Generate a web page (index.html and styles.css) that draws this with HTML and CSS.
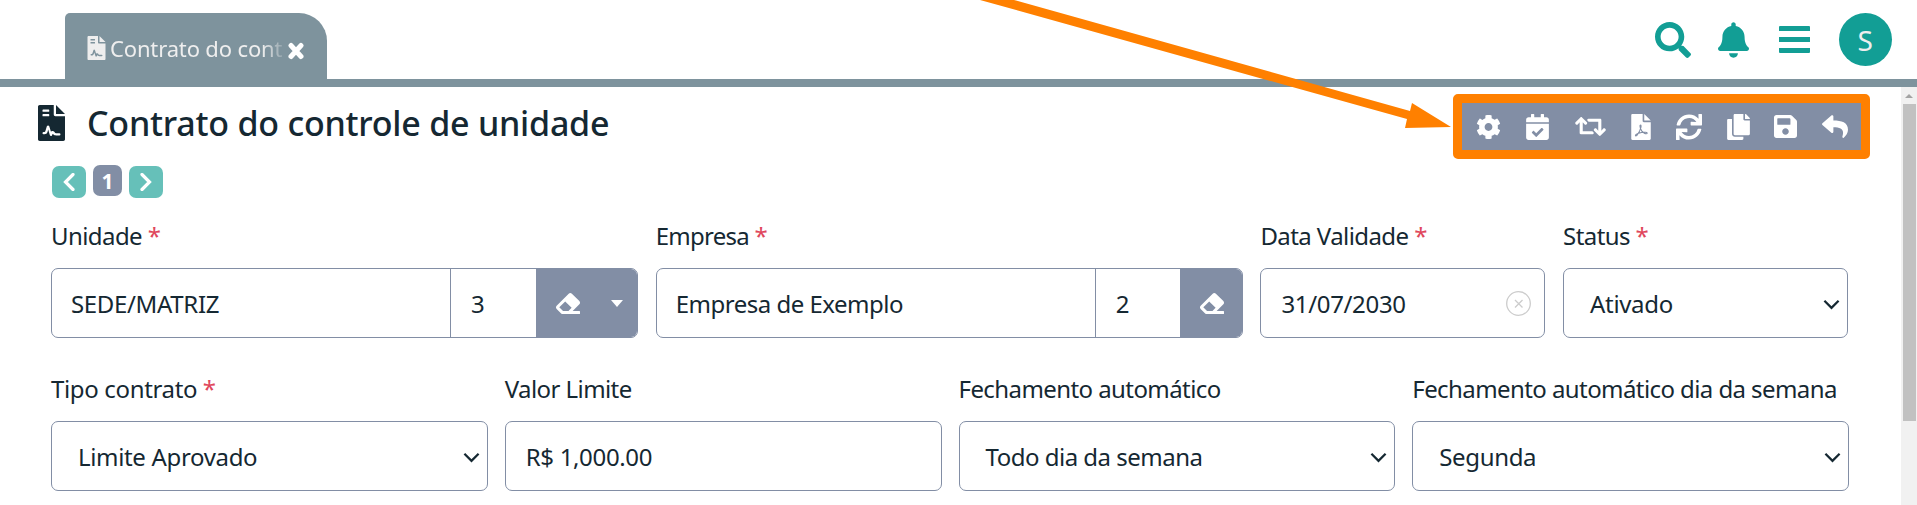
FILE: index.html
```html
<!DOCTYPE html>
<html lang="pt-BR">
<head>
<meta charset="utf-8">
<title>Contrato do controle de unidade</title>
<link rel="stylesheet" href="styles.css">
</head>
<body>
<svg class="defs" aria-hidden="true">
  <symbol id="contract" viewBox="0 0 384 512"><path fill-rule="evenodd" d="M224 0v136c0 13 11 24 24 24h136v328c0 13-11 24-24 24H24c-13 0-24-11-24-24V24C0 11 11 0 24 0zM256 0l128 128H256zM72 64c-4 0-8 4-8 8v16c0 4 4 8 8 8h80c4 0 8-4 8-8V72c0-4-4-8-8-8zm0 64c-4 0-8 4-8 8v16c0 4 4 8 8 8h80c4 0 8-4 8-8v-16c0-4-4-8-8-8zM80 384c-21 0-21 32 0 32h12c20 0 37-13 43-32l10-34 24 79c4 14 23 15 29 3l8-15c3-5 7-5 10-1 10 13 26 16 40 16h48c21 0 21-32 0-32h-48c-8 0-14-2-17-8-11-22-38-28-56-14l-23-75c-5-17-29-17-34 0l-22 72c-2 6-6 9-12 9z"/></symbol>
  <symbol id="eraser" viewBox="0 0 512 512"><path fill-rule="evenodd" d="M498 273c19-19 19-49 0-68L339 46c-19-19-50-19-68 0L14 303c-19 19-19 49 0 68l96 96c9 9 21 13 34 13h356c7 0 12-5 12-12v-40c0-7-5-12-12-12H355zm-302-61l137 136-67 68H150l-80-80z"/></symbol>
  <symbol id="chevron" viewBox="0 0 18 11"><path d="M1.5 1.5 9 9l7.500-7.500" fill="none" stroke="currentColor" stroke-width="2.400"/></symbol>
</svg>

<header class="topbar">
  <div class="tab">
    <svg class="tab-icon"><use href="#contract"/></svg>
    <span class="tab-title">Contrato do cont</span>
    <svg class="tab-close" viewBox="0 0 18 18"><path d="M4 3.500l10 11M14 3.500L4 14.500" stroke="currentColor" stroke-width="5" stroke-linecap="round"/></svg>
  </div>
  <nav class="tools">
    <svg class="i-search" viewBox="0 0 512 512"><path d="M505 442.700L405.300 343c-4.500-4.500-10.600-7-17-7H372c27.600-35.300 44-79.700 44-128C416 93.100 322.900 0 208 0S0 93.100 0 208s93.100 208 208 208c48.300 0 92.700-16.400 128-44v16.300c0 6.400 2.500 12.500 7 17l99.700 99.700c9.400 9.400 24.600 9.400 33.900 0l28.300-28.300c9.400-9.400 9.400-24.600.1-34zM208 336c-70.700 0-128-57.200-128-128 0-70.700 57.200-128 128-128 70.700 0 128 57.200 128 128 0 70.700-57.200 128-128 128z"/></svg>
    <svg class="i-bell" viewBox="0 0 448 512"><path d="M224 512c35.320 0 63.970-28.650 63.970-64H160.030c0 35.350 28.650 64 63.970 64zm215.390-149.710c-19.320-20.760-55.470-51.990-55.470-154.290 0-77.700-54.480-139.900-127.940-155.160V32c0-17.670-14.320-32-31.980-32s-31.980 14.330-31.980 32v20.840C118.560 68.100 64.080 130.300 64.080 208c0 102.300-36.150 133.530-55.470 154.290-6 6.450-8.660 14.160-8.610 21.710.11 16.400 12.980 32 32.100 32h383.800c19.120 0 32-15.600 32.100-32 .05-7.550-2.610-15.270-8.610-21.710z"/></svg>
    <svg class="i-bars" viewBox="0 0 31 28"><path d="M1 0h29q1 0 1 1v4H0V1q0-1 1-1zM0 11h31v5H0zM0 22h31v4q0 1-1 1H1q-1 0-1-1z"/></svg>
    <span class="avatar">S</span>
  </nav>
</header>

<div class="body">
  <main class="page">
    <div class="heading">
      <h1 class="title"><svg class="title-icon"><use href="#contract"/></svg><span>Contrato do controle de unidade</span></h1>
      <div class="actions">
        <svg class="a-gear" viewBox="0 0 512 512"><path d="M487.400 315.700l-42.600-24.600c4.300-23.200 4.300-47 0-70.200l42.600-24.600c4.900-2.800 7.100-8.600 5.500-14-11.100-35.600-30-67.800-54.700-94.600-3.800-4.100-10-5.100-14.800-2.300L380.800 110c-17.900-15.400-38.500-27.300-60.800-35.100V25.800c0-5.600-3.900-10.500-9.400-11.700-36.700-8.200-74.300-7.800-109.200 0-5.500 1.200-9.400 6.100-9.400 11.700V75c-22.200 7.900-42.800 19.800-60.800 35.100L88.700 85.500c-4.900-2.800-11-1.900-14.800 2.300-24.700 26.700-43.600 58.900-54.700 94.600-1.700 5.400.6 11.200 5.500 14L67.300 221c-4.300 23.200-4.300 47 0 70.200l-42.600 24.600c-4.900 2.800-7.100 8.600-5.500 14 11.100 35.600 30 67.800 54.700 94.600 3.800 4.100 10 5.100 14.800 2.300l42.600-24.600c17.900 15.400 38.500 27.300 60.800 35.100v49.200c0 5.600 3.900 10.500 9.400 11.700 36.700 8.200 74.300 7.800 109.200 0 5.500-1.200 9.400-6.100 9.400-11.700v-49.200c22.200-7.900 42.800-19.800 60.800-35.100l42.600 24.600c4.900 2.800 11 1.900 14.800-2.300 24.700-26.700 43.600-58.900 54.700-94.600 1.500-5.500-.7-11.300-5.600-14.100zM256 336c-44.100 0-80-35.900-80-80s35.900-80 80-80 80 35.900 80 80-35.900 80-80 80z"/></svg>
        <svg class="a-cal" viewBox="0 0 448 512"><path fill-rule="evenodd" d="M0 112c0-26 21-48 48-48h48V12c0-7 5-12 12-12h40c7 0 12 5 12 12v52h128V12c0-7 5-12 12-12h40c7 0 12 5 12 12v52h48c27 0 48 22 48 48v48H0zM0 192h448v272c0 27-21 48-48 48H48c-27 0-48-21-48-48zM339 299l-22-22c-5-5-12-5-17 0L199 377l-44-44c-5-5-12-5-17 0l-22 22c-5 5-5 12 0 17l75 75c4 5 12 5 16 0l132-131c5-5 5-12 0-17z"/></svg>
        <svg class="a-swap" viewBox="0 0 640 512"><path d="M629.700 343.600L529 444.300c-9.400 9.400-24.600 9.400-33.900 0L394.300 343.600c-9.400-9.400-9.400-24.600 0-33.900l10.800-10.800c9.600-9.600 25.100-9.300 34.400.5L480 342.100V160H292.500c-6.400 0-12.500-2.500-17-7l-16-16c-15.100-15.100-4.400-41 17-41H520c13.300 0 24 10.700 24 24v222.100l40.400-42.800c9.300-9.800 24.900-10.100 34.400-.5l10.800 10.800c9.500 9.400 9.500 24.600.1 34zM364.500 359c-4.500-4.500-10.600-7-17-7H160V169.900l40.400 42.800c9.300 9.800 24.900 10.100 34.400.5l10.800-10.800c9.400-9.400 9.400-24.600 0-33.900L145 67.700c-9.400-9.400-24.600-9.400-33.900 0L10.300 168.400c-9.400 9.400-9.400 24.600 0 33.900l10.800 10.800c9.600 9.600 25.100 9.300 34.400-.5L96 169.900V392c0 13.300 10.700 24 24 24h243.500c21.400 0 32.100-25.900 17-41z"/></svg>
        <svg class="a-pdf" viewBox="0 0 384 512"><path d="M224 0v136c0 13 11 24 24 24h136v328c0 13-11 24-24 24H24c-13 0-24-11-24-24V24C0 11 11 0 24 0zM256 0l128 128H256z"/><path class="cut" d="M184 218c-18 0-14 32-3 67 12 35 44 76 77 95 25 14 55 14 56-3 2-23-64-22-110-15-44 7-119 35-122 61-1 14 20 9 33-8 31-40 65-109 76-153 5-20 4-44-7-44z"/></svg>
        <svg class="a-sync" viewBox="0 0 512 512"><path d="M440.650 12.570l4 82.770A247.160 247.160 0 0 0 255.830 8C134.730 8 33.910 94.920 12.290 209.820A12 12 0 0 0 24.090 224h49.050a12 12 0 0 0 11.670-9.260 175.910 175.910 0 0 1 317-56.940l-101.460-4.860a12 12 0 0 0-12.570 12v47.410a12 12 0 0 0 12 12H500a12 12 0 0 0 12-12V12a12 12 0 0 0-12-12h-47.370a12 12 0 0 0-11.980 12.570zM255.830 432a175.610 175.610 0 0 1-146-77.800l101.800 4.870a12 12 0 0 0 12.570-12v-47.400a12 12 0 0 0-12-12H12a12 12 0 0 0-12 12V500a12 12 0 0 0 12 12h47.350a12 12 0 0 0 12-12.600l-4.150-82.570A247.170 247.170 0 0 0 255.830 504c121.110 0 221.930-86.920 243.550-201.820a12 12 0 0 0-11.800-14.180h-49.050a12 12 0 0 0-11.670 9.260A175.860 175.860 0 0 1 255.830 432z"/></svg>
        <svg class="a-copy" viewBox="0 0 448 512"><path d="M320 448v40c0 13.255-10.745 24-24 24H24c-13.255 0-24-10.745-24-24V120c0-13.255 10.745-24 24-24h72v296c0 30.879 25.121 56 56 56h168zm0-344V0H152c-13.255 0-24 10.745-24 24v368c0 13.255 10.745 24 24 24h272c13.255 0 24-10.745 24-24V128H344c-13.200 0-24-10.800-24-24zm120.971-31.029L375.029 7.029A24 24 0 0 0 358.059 0H352v96h96v-6.059a24 24 0 0 0-7.029-16.970z"/></svg>
        <svg class="a-save" viewBox="0 0 448 448"><path d="M433.941 97.941l-83.882-83.882A48 48 0 0 0 316.118 0H48C21.490 0 0 21.490 0 48v352c0 26.510 21.490 48 48 48h352c26.510 0 48-21.490 48-48V131.882a48 48 0 0 0-14.059-33.941zM224 384c-35.346 0-64-28.654-64-64s28.654-64 64-64 64 28.654 64 64-28.654 64-64 64zm96-304.520V180c0 6.627-5.373 12-12 12H76c-6.627 0-12-5.373-12-12V76c0-6.627 5.373-12 12-12h228.520a12 12 0 0 1 8.485 3.515l3.480 3.480A11.996 11.996 0 0 1 320 79.480z"/></svg>
        <svg class="a-reply" viewBox="0 32 512 448"><path d="M8.309 189.836L184.313 37.851C199.719 24.546 224 35.347 224 56.015v80.053c160.629 1.839 288 34.032 288 186.258 0 61.441-39.581 122.309-83.333 154.132-13.653 9.931-33.111-2.533-28.077-18.631 45.344-145.012-21.507-183.510-176.590-185.742V360c0 20.700-24.300 31.453-39.687 18.164l-176.004-152c-11.071-9.562-11.086-26.753 0-36.328z"/></svg>
      </div>
    </div>

    <div class="pager">
      <button class="pg nav" aria-label="Anterior"><svg viewBox="0 0 12 18"><path d="M10 1.500 2.500 9l7.500 7.500" fill="none" stroke="currentColor" stroke-width="3.200" stroke-linecap="round"/></svg></button>
      <button class="pg num">1</button>
      <button class="pg nav" aria-label="Próxima"><svg viewBox="0 0 12 18"><path d="M2 1.500 9.500 9 2 16.500" fill="none" stroke="currentColor" stroke-width="3.200" stroke-linecap="round"/></svg></button>
    </div>

    <form class="form">
      <div class="row row-a">
        <div class="field">
          <label class="label"><span>Unidade</span> <b class="req">*</b></label>
          <div class="control group">
            <span class="text">SEDE/MATRIZ</span><span class="code code-a">3</span>
            <span class="addon addon-wide"><svg class="eraser"><use href="#eraser"/></svg><i class="caret"></i></span>
          </div>
        </div>
        <div class="field">
          <label class="label"><span class="snug">Empresa</span> <b class="req">*</b></label>
          <div class="control group">
            <span class="text text-long">Empresa de Exemplo</span><span class="code">2</span>
            <span class="addon"><svg class="eraser"><use href="#eraser"/></svg></span>
          </div>
        </div>
        <div class="field">
          <label class="label"><span>Data Validade</span> <b class="req">*</b></label>
          <div class="control date"><span>31/07/2030</span><svg class="clear" viewBox="0 0 25 25"><circle cx="12.500" cy="12.500" r="11.800"/><path d="M9 9l7.500 7.500M16.500 9L9 16.500"/></svg></div>
        </div>
        <div class="field">
          <label class="label"><span>Status</span> <b class="req">*</b></label>
          <div class="control select"><span>Ativado</span><svg class="chev"><use href="#chevron"/></svg></div>
        </div>
      </div>
      <div class="row row-b">
        <div class="field">
          <label class="label"><span class="loose">Tipo contrato</span> <b class="req">*</b></label>
          <div class="control select"><span>Limite Aprovado</span><svg class="chev"><use href="#chevron"/></svg></div>
        </div>
        <div class="field">
          <label class="label"><span>Valor Limite</span></label>
          <div class="control"><span>R$ 1,000.00</span></div>
        </div>
        <div class="field">
          <label class="label"><span>Fechamento automático</span></label>
          <div class="control select"><span class="text-long">Todo dia da semana</span><svg class="chev"><use href="#chevron"/></svg></div>
        </div>
        <div class="field">
          <label class="label"><span>Fechamento automático dia da semana</span></label>
          <div class="control select"><span>Segunda</span><svg class="chev"><use href="#chevron"/></svg></div>
        </div>
      </div>
    </form>
  </main>
  <div class="scrollbar"><i class="up"></i><i class="thumb"></i></div>
</div>

<svg class="arrow" viewBox="0 0 1917 505"><path d="M980 0h34l396 111 2-8 39 24-46 1 2-9z"/></svg>
</body>
</html>
```
FILE: styles.css
```css
* { box-sizing: border-box; }
body {
  margin: 0;
  height: 505px;
  overflow: hidden;
  background: #fff;
  color: #152832;
  font: 24px/32px "Noto Sans", "Open Sans", sans-serif;
  letter-spacing: -0.58px;
}
svg { display: block; fill: currentColor; flex: none; }
.defs { display: none; }

.topbar {
  display: flex;
  justify-content: space-between;
  align-items: flex-end;
  height: 87px;
  padding: 0 25px 0 65px;
  border-bottom: 8px solid #7e939d;
}
.tab {
  display: flex;
  width: 262px;
  height: 66px;
  padding-left: 22px;
  background: #7e939d;
  border-radius: 5px 28px 0 0;
  color: #eee;
}
.tab-icon { width: 19px; height: 24px; margin-top: 23px; }
.tab-title {
  width: 174px;
  margin: 19px 0 0 4px;
  white-space: nowrap;
  font-size: 22px;
  letter-spacing: -0.15px;
  height: 34px;
  -webkit-mask-image: linear-gradient(to right, #000 152px, transparent 178px);
  mask-image: linear-gradient(to right, #000 152px, transparent 178px);
}
.tab-close { width: 18px; height: 18px; margin: 29px 0 0 3px; color: #fff; }

.tools { display: flex; align-items: flex-start; height: 66px; color: #129e95; }
.i-search { width: 36px; height: 36px; margin: 9px 27px 0 0; }
.i-bell { width: 31px; height: 36px; margin: 9px 30px 0 0; }
.i-bars { width: 31px; height: 28px; margin: 13px 29px 0 0; }
.avatar {
  width: 53px;
  height: 53px;
  padding-right: 1px;
  border-radius: 50%;
  background: #129e95;
  color: #eee;
  font-size: 28px;
  line-height: 54px;
  text-align: center;
}

.body { display: flex; height: 418px; }
.page { flex: 1; padding: 7px 31px 0 38px; }
.heading { display: flex; justify-content: space-between; height: 65px; }
.title { display: flex; margin: 0; font-size: 34px; font-weight: 500; line-height: 44px; letter-spacing: -0.23px; }
.title-icon { width: 27px; height: 36px; margin: 11px 22px 0 0; }
.title span { margin-top: 7px; }
.actions {
  display: flex;
  align-items: center;
  width: 417px;
  height: 65px;
  padding-left: 14px;
  border: 9px solid #ff8000;
  border-radius: 5px;
  background: #828ea5;
  color: #fff;
}
.a-gear { width: 25px; height: 26px; margin-right: 25px; }
.a-cal { width: 23px; height: 26px; margin-right: 26px; }
.a-swap { width: 31px; height: 25px; margin-right: 25px; }
.a-pdf { width: 20px; height: 26px; margin-right: 25px; }
.a-sync { width: 26px; height: 26px; margin-right: 25px; }
.a-copy { width: 23px; height: 26px; margin-right: 24px; }
.a-save { width: 23px; height: 23px; margin-right: 25px; }
.a-reply { width: 26px; height: 23px; }
.cut { fill: none; stroke: #828ea5; stroke-width: 20px; }

.pager { display: flex; gap: 7px; padding: 6px 0 0 14px; height: 51px; }
.pg {
  display: grid;
  place-items: center;
  border: 0;
  border-radius: 7px;
  padding: 0;
  color: #fff;
  background: #66c0b9;
}
.nav { width: 34px; height: 32px; margin-top: 1px; }
.nav svg { width: 12px; height: 18px; }
.num { width: 29px; height: 31px; background: #828ea5; font: 700 21px/32px "Noto Sans", sans-serif; }

.form { padding-left: 13px; width: 1811px; }
.row { display: grid; }
.row-a { grid-template-columns: 587px 587px 285px 285px; column-gap: 17.700px; height: 153px; }
.row-b { grid-template-columns: repeat(4, 1fr); column-gap: 17px; }
.label { display: block; height: 58px; padding-top: 10px; white-space: nowrap; }
.loose { letter-spacing: -0.35px; }
.snug { letter-spacing: -0.75px; }
.req { color: #e0475c; font-weight: 400; }
.control {
  display: flex;
  align-items: center;
  justify-content: space-between;
  height: 70px;
  padding: 2px 19px 0 20px;
  border: 1px solid #828ea5;
  border-radius: 7px;
  letter-spacing: -0.34px;
}
.group { padding: 0; align-items: stretch; overflow: hidden; justify-content: flex-start; line-height: 69px; }
.text { flex: 1; padding-left: 19px; }
.text-long { letter-spacing: -0.5px; }
.code { width: 85px; padding-left: 20px; border-left: 1px solid #828ea5; }
.code-a { width: 86px; }
.addon { display: flex; width: 62px; padding-left: 20px; background: #828ea5; color: #fff; }
.addon-wide { width: 101px; }
.eraser { width: 24px; height: 27px; margin-top: 21px; }
.caret { width: 0; height: 0; margin: 31px 0 0 31px; border: 6px solid transparent; border-top: 7px solid #fff; border-bottom: 0; }
.date { padding-right: 13px; }
.clear { width: 25px; height: 25px; margin-top: -1px; fill: none; stroke: #ccc; stroke-width: 1.300; }
.select { padding: 2px 7px 0 26px; }
.chev { width: 17px; height: 11px; }

.scrollbar { display: flex; flex-direction: column; align-items: center; width: 16px; background: #f1f1f1; }
.up { margin: 7px 0 6px; border: 4px solid transparent; border-bottom-color: #a3a3a3; border-top: 0; }
.thumb { width: 13px; height: 317px; background: #c1c1c1; }

/* Callout arrow drawn over the page */
.arrow { position: absolute; left: 0; top: 0; width: 1917px; height: 505px; fill: #ff8000; pointer-events: none; }
```
